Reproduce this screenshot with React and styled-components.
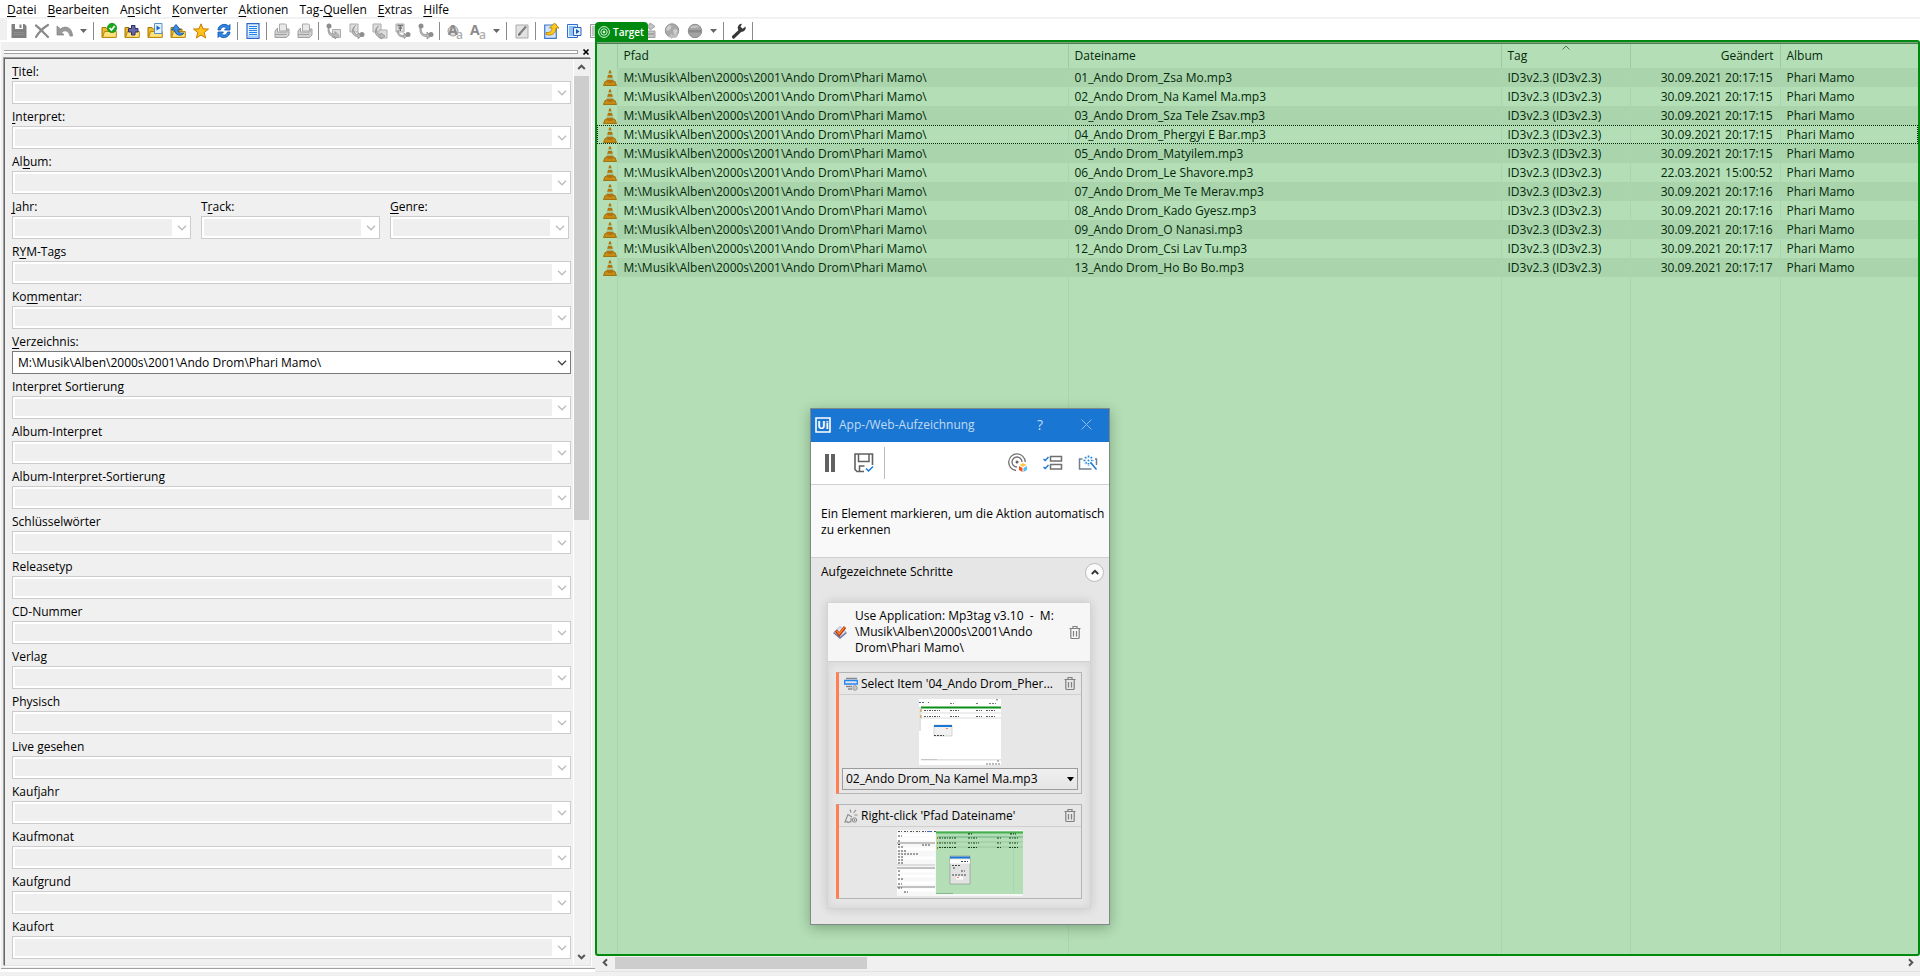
import React from "react";
import styled, { createGlobalStyle, css } from "styled-components";

const GlobalStyle = createGlobalStyle`
  *, *::before, *::after { box-sizing: border-box; }
  body {
    margin: 0;
    background: #f0f0f0;
    color: #000;
    font: 12px/16px "Open Sans", "Noto Sans", sans-serif;
  }
  button, select, input { font: inherit; color: inherit; margin: 0; }
  button { padding: 0; border: 0; background: none; }
  svg { display: block; overflow: visible; }
`;

/* ---------- window frame ---------- */

const Window = styled.div`
  display: flex;
  flex-direction: column;
  height: 100vh;
  min-height: 480px;
  overflow: hidden;
`;

const MenuBar = styled.nav`
  display: flex;
  gap: 11px;
  height: 18px;
  padding: 2px 7px 0;
  background: #fff;
`;

const MenuItem = styled.button`
  line-height: 16px;
  white-space: nowrap;
`;

const Key = styled.span`
  text-decoration: underline;
  text-underline-offset: 2px;
`;

const Toolbar = styled.div`
  display: flex;
  align-items: center;
  height: 22px;
  margin-left: 7px;
  padding-top: 2px;
  background: #fff;
  box-shadow: 0 -1px #f0f0f0;
  border-top: 1px solid #f4f4f4;
`;

const ToolButton = styled.button`
  display: grid;
  place-items: center;
  flex: none;
  width: 23px;
  height: 20px;
  visibility: ${(p) => (p.$covered ? "hidden" : "visible")};
`;

const DropButton = styled(ToolButton)`
  width: 15px;
`;

const Separator = styled.span`
  flex: none;
  width: 6px;
  height: 18px;
  background: linear-gradient(#8c8c8c, #8c8c8c) 2px 0 / 1px 100% no-repeat;
`;

const Main = styled.main`
  display: flex;
  flex: 1;
  min-height: 0;
`;

const StatusStrip = styled.div`
  height: 4px;
  background: #f0f0f0;
`;

/* ---------- tag panel ---------- */

const TagPane = styled.aside`
  display: flex;
  flex-direction: column;
  flex: none;
  width: 595px;
  padding: 5px 3px 3px 3px;
  border-top: 2px solid #fff;
  border-bottom: 3px solid #fff;
  border-left: 1px solid #fafafa;
  box-shadow: inset 0 -1px #a0a0a0;
`;

const Gripper = styled.div`
  display: flex;
  align-items: center;
  height: 10px;
  gap: 4px;
  margin-bottom: 1px;
`;

const GripLines = styled.div`
  width: 574px;
  height: 4px;
  border: solid #a0a0a0;
  border-width: 1px 1px 1px 0;
  background: #fff;
  flex: none;
`;

const CloseButton = styled.button`
  display: grid;
  place-items: center;
  width: 8px;
  height: 8px;
`;

const TagBox = styled.div`
  display: flex;
  flex: 1;
  min-height: 0;
  width: 587px;
  border: 1px solid;
  border-color: #696969 #e3e3e3 #e3e3e3 #696969;
  box-shadow: -1px -1px #a0a0a0, 1px 1px #fff;
  background: #f0f0f0;
`;

const TagForm = styled.form`
  flex: 1;
  min-width: 0;
  overflow: hidden;
  padding: 0 2px 0 7px;
  border-right: 1px solid #fff;
`;

const Field = styled.div`
  display: flex;
  flex-direction: column;
  min-width: 0;
`;

const FieldLabel = styled.label`
  height: 22px;
  padding-top: 5px;
`;

const FieldRow = styled.div`
  display: grid;
  grid-template-columns: repeat(3, 1fr);
  gap: 10px;
  margin-right: 2px;
`;

const ComboShell = styled.div`
  display: grid;
  height: 23px;
  align-items: center;
  svg { grid-area: 1 / 1; justify-self: end; margin-right: 4px; pointer-events: none; }
`;

const Combo = styled.select`
  grid-area: 1 / 1;
  appearance: none;
  width: 100%;
  height: 23px;
  padding: 0 22px 0 5px;
  border: 1px solid #ccc;
  border-radius: 0;
  opacity: 1;
  color: #000;
  background: #fff linear-gradient(#efefef, #efefef) 2px 2px / calc(100% - 20px) 17px no-repeat;
  ${(p) =>
    p.$filled &&
    css`
      border-color: #7a7a7a;
      background: #fff;
    `}
`;

const VScroll = styled.div`
  display: flex;
  flex-direction: column;
  width: 16px;
  background: #f0f0f0;
`;

const HScroll = styled.div`
  display: flex;
  height: 16px;
  margin-left: 1px;
  border-bottom: 1px solid #e3e3e3;
  background: #f0f0f0;
`;

const ScrollButton = styled.button`
  display: grid;
  place-items: center;
  flex: none;
  width: ${(p) => p.$w || 15}px;
  height: ${(p) => p.$h || 17}px;
`;

const VThumb = styled.div`
  height: 49%;
  margin-right: 1px;
  background: #cdcdcd;
`;

const HThumb = styled.div`
  width: 19%;
  height: 12px;
  margin-top: 1px;
  background: #cdcdcd;
`;

const Grow = styled.div`
  flex: 1;
`;

/* ---------- file list ---------- */

const ListPane = styled.section`
  position: relative;
  display: flex;
  flex-direction: column;
  flex: 1;
  min-width: 0;
  background: #f0f0f0;
`;

const TargetArea = styled.div`
  flex: 1;
  min-height: 0;
  border: 2px solid #00890f;
  border-radius: 0 3px 3px 3px;
  background: #b4deb6;
  position: relative;
  display: flex;
  flex-direction: column;
`;

const TargetEdge = styled.div`
  flex: none;
  height: 2px;
  background: #4e7f52;
  border-top: 1px solid #77a57a;
`;

const TargetTag = styled.div`
  position: absolute;
  left: -2px;
  top: -20px;
  display: flex;
  align-items: center;
  gap: 3px;
  height: 20px;
  padding: 0 4px 0 3px;
  border-radius: 4px 4px 0 0;
  background: #00890f;
  color: #fff;
  font: 600 10px/18px "Open Sans", sans-serif;
`;

const FileTable = styled.table`
  width: 100%;
  flex: 1;
  table-layout: fixed;
  border-collapse: collapse;
  color: #04290a;
`;

const Col = styled.col`
  width: ${(p) => (p.$w ? p.$w + "px" : "auto")};
`;

const HeadCell = styled.th`
  height: 24px;
  padding: 0 6px;
  font-weight: 400;
  text-align: ${(p) => (p.$right ? "right" : "left")};
  border-right: 1px solid #9fcaa2;
  &:last-child { border-right: 0; }
`;

const HeadInner = styled.span`
  display: grid;
  svg { grid-area: 1 / 1; justify-self: center; align-self: start; margin-top: -3px; }
  span { grid-area: 1 / 1; }
`;

const FileRow = styled.tr`
  height: 19px;
  ${(p) =>
    p.$focus &&
    css`
      outline: 1px dotted #04290a;
      outline-offset: -1px;
    `}
`;

const Cell = styled.td`
  height: 19px;
  padding: 0 7px 0 6px;
  white-space: nowrap;
  overflow: hidden;
  text-align: ${(p) => (p.$right ? "right" : "left")};
  background: ${(p) => (p.$shade ? "#aad4ac" : "transparent")};
  border-right: 1px solid #a9d5b5;
  &:last-child { border-right: 0; }
`;

const IconCell = styled.td`
  height: 19px;
  padding: 0 0 0 6px;
  border-right: 1px solid #a9d5b5;
`;

const FillerCell = styled.td`
  border-right: 1px solid #a9d5b5;
  &:last-child { border-right: 0; }
`;

/* ---------- recorder dialog ---------- */

const Dialog = styled.section`
  position: absolute;
  left: 810px;
  top: 408px;
  width: 300px;
  display: flex;
  flex-direction: column;
  border: 1px solid #7f8a86;
  background: #e6e6e6;
  box-shadow: 0 3px 12px rgba(0, 40, 0, 0.3);
`;

const TitleBar = styled.header`
  display: flex;
  align-items: center;
  height: 33px;
  padding: 0 17px 2px 4px;
  background: #1976d2;
  color: #c2dbf3;
`;

const Title = styled.h1`
  flex: 1;
  margin: 0 0 0 8px;
  font-size: 12px;
  font-weight: 400;
`;

const TitleButton = styled.button`
  display: grid;
  place-items: center;
  width: 12px;
  margin-left: 34px;
  font-size: 14px;
`;

const Tools = styled.div`
  display: flex;
  align-items: center;
  gap: 15px;
  height: 43px;
  padding: 0 11px 0 10px;
  background: #fff;
  border-bottom: 1px solid #d0d0d0;
`;

const IconButton = styled.button`
  display: grid;
  place-items: center;
  flex: none;
`;

const ToolsDivider = styled.span`
  width: 1px;
  height: 32px;
  margin-left: -5px;
  background: #bdbdbd;
`;

const Hint = styled.p`
  height: 73px;
  margin: 0;
  padding: 21px 4px 0 10px;
  background: #f9f9f9;
  border-bottom: 1px solid #d0d0d0;
`;

const Steps = styled.div`
  padding: 0 18px 15px 16px;
`;

const StepsHead = styled.div`
  display: flex;
  align-items: center;
  justify-content: space-between;
  height: 28px;
  padding: 0 5px 0 10px;
`;

const StepsTitle = styled.h2`
  margin: 0;
  font-size: 12px;
  font-weight: 400;
`;

const Collapse = styled.button`
  display: grid;
  place-items: center;
  width: 19px;
  height: 19px;
  border: 1px solid #bcbcbc;
  border-radius: 50%;
  background: #fbfbfb;
`;

const AppCard = styled.div`
  margin-top: 16px;
  border: 1px solid #d4d4d4;
  background: #e6e6e6;
  box-shadow: 0 0 10px rgba(0, 0, 0, 0.14);
`;

const AppHead = styled.div`
  display: grid;
  grid-template-columns: 14px 1fr 12px;
  align-items: center;
  gap: 8px;
  height: 59px;
  padding: 0 9px 0 5px;
  background: #f6f6f6;
  border-bottom: 1px solid #d0d0d0;
`;

const StepList = styled.div`
  display: flex;
  flex-direction: column;
  gap: 10px;
  padding: 10px 8px 9px;
  box-shadow: inset 0 0 10px rgba(0, 0, 0, 0.08);
`;

const Step = styled.article`
  border: 1px solid #b4b4b4;
  border-left: 3px solid #ff7f50;
  background: #e7e7e7;
`;

const StepHead = styled.div`
  display: flex;
  align-items: center;
  height: 22px;
  padding: 0 5px;
  border-bottom: 1px solid #cfcfcf;
`;

const StepName = styled.span`
  flex: 1;
  min-width: 0;
  margin: 0 5px 0 3px;
  overflow: hidden;
  white-space: nowrap;
  text-overflow: ellipsis;
`;

const Shot = styled.div`
  display: grid;
  place-items: center;
  height: ${(p) => p.$h}px;
`;

const StepComboShell = styled.div`
  display: grid;
  align-items: center;
  margin: 0 3px 3px;
  svg { grid-area: 1 / 1; justify-self: end; margin-right: 4px; pointer-events: none; }
`;

const StepCombo = styled.select`
  grid-area: 1 / 1;
  appearance: none;
  width: 100%;
  height: 22px;
  padding: 0 14px 0 3px;
  border: 1px solid #9c9c9c;
  border-radius: 0;
  background: linear-gradient(#f0f0f0, #e5e5e5);
`;

/* ---------- icons ---------- */

const Ico = ({ s = 16, children }) => (
  <svg width={s} height={s} viewBox="0 0 16 16" fill="none" aria-hidden="true">
    {children}
  </svg>
);

const FolderBase = () => (
  <>
    <path d="M1 4.5h4l1.500 1.500H12v8.500H1z" fill="#e9b92f" stroke="#a87400" />
    <path d="M3.500 8.500h11.800v5.900H1.600z" fill="#ffe27a" stroke="#b98408" />
  </>
);

const SheetGrey = ({ x = 5, y = 6 }) => (
  <path d={`M${x} ${y}h8v8h-8z`} fill="#dedede" stroke="#ababab" />
);

const icons = {
  save: (
    <Ico>
      <path d="M0.500 1h13l2 2v12H.5z" fill="#808080" />
      <path d="M4 1h8v5H4z" fill="#fff" />
      <path d="M8.500 1.500h2v3.500h-2z" fill="#808080" />
      <path d="M3 9.500h10M3 11.500h10" stroke="#8f8f8f" />
    </Ico>
  ),
  cut: (
    <Ico>
      <path d="M2 2.500c4 3 8 7.500 12 11.500M14 2C9 5 5 9 2 14" stroke="#8a8a8a" strokeWidth="2.200" strokeLinecap="round" />
    </Ico>
  ),
  undo: (
    <Ico>
      <path d="M0 3v9h7L4.500 9.200C8 6.500 12 8 13 13h2.500C15.500 5.500 9 1.500 3.500 6z" fill="#9a9a9a" stroke="#7e7e7e" strokeWidth=".7" />
    </Ico>
  ),
  down: (
    <svg width="7" height="4" viewBox="0 0 7 4" aria-hidden="true">
      <path d="M0 0h7L3.500 4z" fill="#666" />
    </svg>
  ),
  folderCheck: (
    <Ico>
      <FolderBase />
      <circle cx="11" cy="5" r="4.700" fill="#17a81c" stroke="#0b7c12" strokeWidth=".6" />
      <path d="M8.500 5l2 2 3.200-4" stroke="#fff" strokeWidth="1.700" />
    </Ico>
  ),
  folderPlus: (
    <Ico>
      <FolderBase />
      <path d="M7.500 2.500h3.500v3h3V9h-3v3H7.500V9h-3V5.500h3z" fill="#6668a8" stroke="#2c2e68" />
    </Ico>
  ),
  folderPlay: (
    <Ico>
      <FolderBase />
      <path d="M7.500.5h7.500v10H7.500z" fill="#e6f1ff" stroke="#5d8fc9" />
      <path d="M9.500 2.500v5l4-2.500z" fill="#1767c4" />
    </Ico>
  ),
  folderUp: (
    <Ico>
      <FolderBase />
      <path d="M1.500 7L6 1.500 10.500 7H8c0 2.500 2 3.500 6 3-2 3.500-9 3-9.500-3z" fill="#3c8ce0" stroke="#10509c" strokeWidth=".9" />
    </Ico>
  ),
  star: (
    <Ico>
      <path d="M8 .8l2 5 5.500.3-4.300 3.500 1.500 5.400L8 12l-4.700 3 1.500-5.400L.5 6.100 6 5.800z" fill="#ffc31e" stroke="#c47a00" />
    </Ico>
  ),
  refresh: (
    <Ico>
      <path d="M2 7c0-5 7-7.500 10.500-4L14 1.500V7H8.500l2-2C8 3 5 4 4.500 7zM14 9c0 5-7 7.500-10.500 4L2 14.500V9h5.500l-2 2c2.500 2 5.500 1 6-2z" fill="#2f86e6" stroke="#0b4fa3" strokeWidth=".8" />
    </Ico>
  ),
  list: (
    <Ico>
      <path d="M2 .7h12v14.600H2z" fill="#e4f1ff" stroke="#2c67c8" strokeWidth="1.200" />
      <path d="M4 3.500h8M4 5.500h8M4 7.500h8M4 9.500h8M4 11.500h8" stroke="#1e83ee" />
      <path d="M2.600 13.500h10.800" stroke="#9ecbfa" strokeWidth="1.600" />
    </Ico>
  ),
  printer: (
    <Ico>
      <path d="M5.500 1h6l1 1v6h-7z" fill="#e9e9e9" stroke="#a9a9a9" />
      <path d="M3.500 5L1 8v6.500h11.500L15 12V6h-2v3H3.500z" fill="#d2d2d2" stroke="#a0a0a0" />
      <path d="M1 11.500h11.500" stroke="#a0a0a0" />
    </Ico>
  ),
  toSheet: (
    <Ico>
      <SheetGrey x={6.5} y={6.5} />
      <circle cx="3" cy="3" r="2.500" fill="#8e8e8e" />
      <path d="M3 5c0 5 2 6 6 6V8.500l4 4-4 3.500v-2.500c-5 0-7-2-7-8z" fill="#bcbcbc" stroke="#8e8e8e" strokeWidth=".8" />
    </Ico>
  ),
  fromSheet: (
    <Ico>
      <SheetGrey x={1} y={1} />
      <path d="M6.500 2.500C3.500 5 4 11 9 11.500V9.500l4 3-4 3.200v-2C3 13.500 1 7 6.500 2.500z" fill="#bcbcbc" stroke="#8e8e8e" strokeWidth=".8" />
      <circle cx="13" cy="11.500" r="2.500" fill="#8e8e8e" />
    </Ico>
  ),
  sheetSheet: (
    <Ico>
      <SheetGrey x={1} y={1} />
      <SheetGrey x={7} y={7} />
      <path d="M6.500 3C3.500 6 3.500 11.500 9 12V10l4 3-4 3v-1.700C3 14 1 7 6.500 3z" fill="#bcbcbc" stroke="#8e8e8e" strokeWidth=".8" />
    </Ico>
  ),
  textTo: (
    <Ico>
      <SheetGrey x={1} y={1} />
      <path d="M2.500 2.500H8M5.300 2.500V8M3.500 5H7" stroke="#777" strokeWidth="1.400" />
      <path d="M3 7c.5 4 2 5.500 6 5.500V10l3 3-3 2.500V14c-5 0-7-2-6-7z" fill="#bcbcbc" stroke="#8e8e8e" strokeWidth=".8" />
      <circle cx="13" cy="11.500" r="2.500" fill="#8e8e8e" />
    </Ico>
  ),
  dotDot: (
    <Ico>
      <circle cx="3" cy="3" r="2.500" fill="#8e8e8e" />
      <path d="M3 5c0 5 2 6.500 6 6.500V9l4 4-4 3v-2.500C4 13.500 1.500 11 2 5z" fill="#bcbcbc" stroke="#8e8e8e" strokeWidth=".8" />
      <circle cx="13" cy="11.500" r="2.500" fill="#8e8e8e" />
    </Ico>
  ),
  caseRun: (
    <Ico>
      <circle cx="6" cy="8" r="5" fill="#dcdcdc" stroke="#9a9a9a" />
      <text x="1" y="12" fontFamily="Open Sans" fontWeight="700" fontSize="14" fill="#8a8a8a">A</text>
      <text x="9" y="16" fontFamily="Open Sans" fontWeight="600" fontSize="12" fill="#adadad">a</text>
    </Ico>
  ),
  caseText: (
    <Ico>
      <text x="0" y="12" fontFamily="Open Sans" fontWeight="700" fontSize="14" fill="#8a8a8a">A</text>
      <text x="9" y="16" fontFamily="Open Sans" fontWeight="600" fontSize="12" fill="#adadad">a</text>
    </Ico>
  ),
  edit: (
    <Ico>
      <path d="M2 2h12v13H2z" fill="#e2e2e2" stroke="#ababab" />
      <path d="M5.500 11L12 3.500" stroke="#808080" strokeWidth="2.200" />
      <path d="M4 13l.8-3 2 1.800z" fill="#555" />
    </Ico>
  ),
  exportSheet: (
    <Ico>
      <path d="M1.700 2h11.600v13.300H1.700z" fill="#cfe3fb" stroke="#3f78d0" strokeWidth="1.200" />
      <path d="M3 9.500c5 .5 6-2 6-4.500H6.500L11.500 0l4.500 5h-3c0 5-4 8.500-10 6.500z" fill="#ffc81f" stroke="#b37700" strokeWidth=".8" />
    </Ico>
  ),
  playlist: (
    <Ico>
      <path d="M1.500 1.500h10v13h-10z" fill="#e4f1ff" stroke="#2f6fd0" />
      <path d="M3 4h7M3 6h7M3 8h4M3 10h4M3 12h7" stroke="#3d90ee" />
      <path d="M7.500 4.500H15v8H7.500z" fill="#e6f1ff" stroke="#2862bd" />
      <path d="M10 6v5l3.500-2.500z" fill="#1455b0" />
    </Ico>
  ),
  grayList: (
    <Ico>
      <path d="M1.500 1.500h12v13h-12z" fill="#eee" stroke="#999" />
      <path d="M3 4h9M3 6h9M3 8h9M3 10h9M3 12h9" stroke="#999" />
    </Ico>
  ),
  outbox: (
    <Ico>
      <path d="M3 2h6V0l5 3.500L9 7V5H3zM2 8h12v6.500H2z" fill="#c4c4c4" stroke="#a0a0a0" />
      <path d="M3 11h10" stroke="#888" />
    </Ico>
  ),
  globe: (
    <Ico>
      <circle cx="8" cy="7.500" r="6.700" fill="#a9a9a9" stroke="#929292" />
      <path d="M3 4c3-3 5-2 4 1S3 8 2 7zM9 7c3-2 6 0 4 3s-3 3-4-3z" fill="#cfcfcf" />
      <path d="M8 10v2c3 .5 4-1 4-3l2 3c-1 3-3 3-6 3v1l-3-3z" fill="#bdbdbd" />
    </Ico>
  ),
  globeFlat: (
    <Ico>
      <circle cx="8" cy="8" r="6.700" fill="#a4a4a4" stroke="#8c8c8c" />
      <path d="M2 7h12v2.500H2z" fill="#8a8a8a" />
      <path d="M3 5c2-3 8-3 9-1l-5 1z" fill="#c6c6c6" />
    </Ico>
  ),
  wrench: (
    <Ico>
      <path d="M2.500 14L9 7.800" stroke="#383838" strokeWidth="3.200" strokeLinecap="round" />
      <path d="M14.500 3.500A4 4 0 1 1 11 .8L9.500 3.800l2.200 2z" fill="#383838" />
    </Ico>
  ),
};

const Chevron = ({ color = "#bcbcbc" }) => (
  <svg width="10" height="6" viewBox="0 0 10 6" fill="none" aria-hidden="true">
    <path d="M1 .8L5 4.800l4-4" stroke={color} strokeWidth="1.300" />
  </svg>
);

const rotations = { up: 0, right: 90, down: 180, left: 270 };

const ScrollArrow = ({ dir }) => (
  <svg width="9" height="9" viewBox="0 0 9 9" fill="none" aria-hidden="true">
    <path d="M1.200 6L4.500 2.700 7.800 6" stroke="#555" strokeWidth="2" transform={`rotate(${rotations[dir]} 4.500 4.500)`} />
  </svg>
);

const Cone = () => (
  <svg width="14" height="16" viewBox="0 0 14 16" aria-hidden="true">
    <path d="M2 11.500h10l1.500 4H.5z" fill="#c98a10" stroke="#966400" strokeWidth=".8" />
    <path d="M6.200.5h1.600L11 12c-1 1.500-7 1.500-8 0z" fill="#a3cf9f" />
    <path d="M6.200.5h1.600l.7 2.700h-3zM5 5h4l.8 2.800H4.200zM3.600 9.700h6.800L11 12c-1 1.500-7 1.500-8 0z" fill="#b5720a" />
  </svg>
);

const TargetIcon = () => (
  <svg width="12" height="12" viewBox="0 0 12 12" fill="none" stroke="#d9f5d9" aria-hidden="true">
    <circle cx="6" cy="6" r="5.400" />
    <circle cx="6" cy="6" r="3.200" />
    <circle cx="6" cy="6" r="1" fill="#fff" />
  </svg>
);

const UiLogo = () => (
  <svg width="16" height="16" viewBox="0 0 16 16" aria-hidden="true">
    <path d="M1 1h14v14H1z" fill="#1976d2" stroke="#fff" strokeWidth="1.600" />
    <text x="8" y="12" textAnchor="middle" fontFamily="Open Sans" fontWeight="700" fontSize="11" fill="#fff">Ui</text>
  </svg>
);

const PauseIcon = () => (
  <svg width="18" height="18" viewBox="0 0 18 18" aria-hidden="true">
    <path d="M4 0h4v18H4zM10 0h4v18h-4z" fill="#616161" />
  </svg>
);

const SaveCheckIcon = () => (
  <svg width="20" height="20" viewBox="0 0 20 20" fill="none" aria-hidden="true">
    <path d="M10 18.500H3L1 16.500V1h17.500v11" stroke="#616161" strokeWidth="1.600" />
    <path d="M4.500 1v7.500H15V1M5.500 18.500V13h5" stroke="#616161" strokeWidth="1.500" />
    <path d="M12 15.500l2.500 2.500 4.500-4.500" stroke="#1976d2" strokeWidth="1.500" />
  </svg>
);

const TargetCubeIcon = () => (
  <svg width="20" height="20" viewBox="0 0 20 20" fill="none" aria-hidden="true">
    <path d="M8 17.500A8.300 8.300 0 1 1 17.300 9" stroke="#707070" strokeWidth="1.300" />
    <path d="M9 14A5 5 0 1 1 14 9" stroke="#707070" strokeWidth="1.300" />
    <circle cx="9" cy="9" r="1.500" fill="#616161" />
    <path d="M15 10l3.500 2-3.500 2-3.500-2z" fill="#ffc94a" />
    <path d="M11 13l3.500 2v4L11 17z" fill="#f4511e" />
    <path d="M19 13l-3.500 2v4L19 17z" fill="#4fc3f7" />
  </svg>
);

const ChecklistIcon = () => (
  <svg width="20" height="18" viewBox="0 0 20 18" fill="none" aria-hidden="true">
    <path d="M7.500 2.500h11v4.500h-11zM7.500 10.500h11V15h-11z" stroke="#707070" strokeWidth="1.500" />
    <path d="M.5 5l1.700 1.500L5.500 3M.5 13l1.700 1.500L5.500 11" stroke="#1976d2" strokeWidth="1.400" />
  </svg>
);

const WandIcon = () => (
  <svg width="20" height="18" viewBox="0 0 20 18" fill="none" aria-hidden="true">
    <path d="M4.500 5h-3v10h12M17 5h1.500v6" stroke="#70808e" strokeWidth="1.500" />
    <path d="M13 9l5.500 6.500" stroke="#1976d2" strokeWidth="1.500" />
    <path
      d="M10.500 1.500v2.500M10.500 9v2.500M5.500 6.500H8M13 6.500h2.500M7 3l1.700 1.700M12.300 8.300L14 10M14 3l-1.700 1.700M8.700 8.300L7 10"
      stroke="#1e88e5"
      strokeWidth="1.700"
      strokeDasharray="1.600 .5"
    />
    <circle cx="10.500" cy="6.500" r="1" fill="#1e88e5" />
  </svg>
);

const TrashIcon = () => (
  <svg width="12" height="13" viewBox="0 0 12 13" fill="none" stroke="#808080" aria-hidden="true">
    <path d="M.5 2.500h11M4 2V.5h4V2M1.800 2.500v9q0 1 1 1h6.400q1 0 1-1v-9M4.500 5v5.500M7.500 5v5.500" strokeWidth="1.200" />
  </svg>
);

const AppIcon = () => (
  <svg width="14" height="14" viewBox="0 0 14 14" aria-hidden="true">
    <path d="M7 2l7 6-7 6-7-6z" fill="#6f7aa6" />
    <path d="M7 1.500l6 5.500-6 5-6-5z" fill="#dfe4f2" stroke="#8c95b5" strokeWidth=".6" />
    <path d="M3 5.500l3.200 4L12 2" fill="none" stroke="#b8330b" strokeWidth="3" />
    <path d="M3.500 5.700L6.200 9 11.500 2.200" fill="none" stroke="#ff8a2c" strokeWidth="1.300" />
  </svg>
);

const SelectItemIcon = () => (
  <svg width="14" height="14" viewBox="0 0 14 14" fill="none" aria-hidden="true">
    <path d="M2 1.500h11M2 9.500h6M4 12h4" stroke="#8a8a8a" strokeWidth="1.300" />
    <path d="M.7 3.500h12.600V7H.7z" stroke="#2484f0" strokeWidth="1.300" />
    <circle cx="11" cy="11" r="2.200" stroke="#8a8a8a" />
    <circle cx="11" cy="11" r=".7" fill="#8a8a8a" />
  </svg>
);

const ClickIcon = () => (
  <svg width="14" height="14" viewBox="0 0 14 14" fill="none" stroke="#8a8a8a" aria-hidden="true">
    <path d="M6 .5l1 3M12 1L9.500 4M13.500 6h-3M8 8L4 5.500 1 13l2-.5 1 1 3-1V9" strokeWidth="1.100" />
    <circle cx="10.500" cy="11" r="2.200" />
    <circle cx="10.500" cy="11" r=".6" fill="#8a8a8a" />
  </svg>
);

const ListShot = () => (
  <svg width="82" height="66" viewBox="0 0 82 66" aria-hidden="true">
    <path d="M0 0h82v66H0z" fill="#fff" />
    <path d="M0 8h2v24H0zM2 60h80v1.500H2z" fill="#e2e2e2" />
    <path d="M2 14h80M2 19h80" stroke="#eee" strokeWidth="2" />
    <path d="M2 8.500h80" stroke="#0b8f17" strokeWidth="2" />
    <path d="M0 3.500h5M9 3.500h1" stroke="#4a5f93" strokeDasharray="2 1" />
    <path d="M31 4.500h4M57 4.500h2M70 4.500h7M77 .8h2M78 62h3M67 65h14" stroke="#777" strokeDasharray="2 1" />
    <path d="M5 11.500h16M31 11.500h9M57 11.500h6M67 11.500h10M5 17.500h16M31 17.500h9M57 17.500h6M67 17.500h10" stroke="#555" strokeWidth="1.200" strokeDasharray="2 1 1 1" />
    <path d="M2 10v3M2 16v3" stroke="#d27a1c" strokeWidth="1" />
    <path d="M15 26h18v11H15z" fill="#f1f1f1" stroke="#c0c0c0" strokeWidth=".6" />
    <path d="M15 26h18v2H15z" fill="#1976d2" />
    <path d="M15 36.500h10" stroke="#444" strokeDasharray="2 1" />
    <path d="M27 29.500h2" stroke="#ff7f50" />
    <path d="M2 60.500h16" stroke="#c6c6c6" />
  </svg>
);

const DesktopShot = () => (
  <svg width="126" height="66" viewBox="0 0 126 66" aria-hidden="true">
    <path d="M0 0h126v66H0z" fill="#f7f7f7" />
    <path d="M0 5h38M0 9h38M0 19h38M0 28h38M0 41h38M0 46h38M0 53h38M0 60h38" stroke="#fff" strokeWidth="3" />
    <path d="M0 13h38M0 38h38M0 57h38" stroke="#8a8a8a" />
    <path d="M0 35h38" stroke="#c4c4c4" />
    <path d="M1 1.500h48" stroke="#555" strokeDasharray="2 1 1 2" />
    <path d="M30 1.500h4" stroke="#3b6fc4" />
    <path d="M1 6h4M1 11h2M1 14.500h3M25 15h9M1 17h5M1 21h8M1 24h20M1 27h5M1 30h5M1 33h5M1 41h2M1 45h2M1 49h5M1 54h4M1 58h4M7 62h4" stroke="#444" strokeDasharray="2 1" />
    <path d="M39 1h87v63H39z" fill="#b4deb6" />
    <path d="M39 2.500h87" stroke="#45b04d" strokeWidth="2" />
    <path d="M41 7h85" stroke="#8fc79c" strokeWidth="2" />
    <path d="M41 12h85M41 17h85" stroke="#a6d3a8" strokeWidth="2" />
    <path d="M42 8h18M71 8h10M100 8h4M112 8h9M42 13h18M71 13h11M100 13h4M112 13h9M42 17.500h18M71 17.500h10M100 17.500h4M112 17.500h9M71 3.800h4M113 3.800h6" stroke="#16401a" strokeWidth="1.200" strokeDasharray="2 1 1 1" />
    <path d="M40.500 7v2M40.500 12v2M40.500 17v2" stroke="#b4780d" />
    <path d="M116.500 18v45" stroke="#a9d5b5" />
    <path d="M39 63.500h17" stroke="#85b889" />
    <path d="M53 26h20v28H53z" fill="#e2e2e2" stroke="#8f9c90" strokeWidth=".7" />
    <path d="M53 29.500h20v4H53z" fill="#fff" />
    <path d="M53 27.500h20" stroke="#1976d2" strokeWidth="2" />
    <path d="M55 35.500h8M56 38h2M64 31.500h7M64 41h4M55 45h14" stroke="#444" strokeDasharray="2 1" />
    <path d="M59 46.500h7v3h-7z" fill="#fff" />
    <path d="M60 47.500h2" stroke="#ff7f50" />
  </svg>
);

/* ---------- data ---------- */

const menu = [
  ["", "D", "atei"],
  ["", "B", "earbeiten"],
  ["A", "n", "sicht"],
  ["", "K", "onverter"],
  ["", "A", "ktionen"],
  ["Tag-", "Q", "uellen"],
  ["", "E", "xtras"],
  ["", "H", "ilfe"],
];

const tools = [
  ["save", "Speichern"], ["cut", "Entfernen"], ["undo", "Rückgängig"], "drop", "sep",
  ["folderCheck", "Verzeichnis wechseln"], ["folderPlus", "Verzeichnis hinzufügen"],
  ["folderPlay", "Playlist öffnen"], ["folderUp", "Übergeordnetes Verzeichnis"],
  ["star", "Favoriten"], ["refresh", "Aktualisieren"], "sep",
  ["list", "Alle auswählen"], "sep",
  ["printer", "Tag kopieren"], ["printer", "Tag einfügen"], "sep",
  ["toSheet", "Dateiname - Tag"], ["fromSheet", "Tag - Dateiname"],
  ["sheetSheet", "Dateiname - Dateiname"], ["textTo", "Textdatei - Tag"],
  ["dotDot", "Tag - Tag"], "sep",
  ["caseRun", "Aktionen"], ["caseText", "Aktionen schnell"], "drop", "sep",
  ["edit", "Erweiterte Tags"], "sep",
  ["exportSheet", "Exportieren"], ["playlist", "Playlist"], ["grayList", "Liste"],
  ["grayList", "Nummerieren", true], "sep",
  ["outbox", "Tag-Quelle"], ["globe", "Websuche"], ["globeFlat", "Web"], "drop", "sep",
  ["wrench", "Optionen"], "sep",
];

const path = "M:\\Musik\\Alben\\2000s\\2001\\Ando Drom\\Phari Mamo\\";

const fields = [
  ["", "T", "itel:"],
  ["", "I", "nterpret:"],
  ["Al", "b", "um:"],
  [["", "J", "ahr:"], ["T", "r", "ack:"], ["", "G", "enre:"]],
  ["R", "Y", "M-Tags"],
  ["Ko", "m", "mentar:"],
  ["", "V", "erzeichnis:", path],
  ["Interpret Sortierung"],
  ["Album-Interpret"],
  ["Album-Interpret-Sortierung"],
  ["Schlüsselwörter"],
  ["Releasetyp"],
  ["CD-Nummer"],
  ["Verlag"],
  ["Physisch"],
  ["Live gesehen"],
  ["Kaufjahr"],
  ["Kaufmonat"],
  ["Kaufgrund"],
  ["Kaufort"],
];

const files = [
  ["01_Ando Drom_Zsa Mo.mp3", "30.09.2021 20:17:15"],
  ["02_Ando Drom_Na Kamel Ma.mp3", "30.09.2021 20:17:15"],
  ["03_Ando Drom_Sza Tele Zsav.mp3", "30.09.2021 20:17:15"],
  ["04_Ando Drom_Phergyi E Bar.mp3", "30.09.2021 20:17:15"],
  ["05_Ando Drom_Matyilem.mp3", "30.09.2021 20:17:15"],
  ["06_Ando Drom_Le Shavore.mp3", "22.03.2021 15:00:52"],
  ["07_Ando Drom_Me Te Merav.mp3", "30.09.2021 20:17:16"],
  ["08_Ando Drom_Kado Gyesz.mp3", "30.09.2021 20:17:16"],
  ["09_Ando Drom_O Nanasi.mp3", "30.09.2021 20:17:16"],
  ["12_Ando Drom_Csi Lav Tu.mp3", "30.09.2021 20:17:17"],
  ["13_Ando Drom_Ho Bo Bo.mp3", "30.09.2021 20:17:17"],
];

/* ---------- parts ---------- */

const Mnemonic = ({ parts: [before, key, after] }) => (
  <>
    {before}
    {key && <Key>{key}</Key>}
    {after}
  </>
);

const TagField = ({ parts }) => {
  const id = "tag-" + parts.slice(0, 3).join("").toLowerCase().replace(/[^a-z0-9]+/g, "-");
  const value = parts[3];
  return (
    <Field>
      <FieldLabel htmlFor={id}>
        <span><Mnemonic parts={parts} /></span>
      </FieldLabel>
      <ComboShell>
        <Combo id={id} disabled={!value} $filled={!!value}>
          <option>{value || ""}</option>
        </Combo>
        <Chevron color={value ? "#444" : undefined} />
      </ComboShell>
    </Field>
  );
};

const TagPanel = () => (
  <TagPane>
    <Gripper>
      <GripLines />
      <CloseButton aria-label="Schließen">
        <svg width="6" height="6" viewBox="0 0 6 6" aria-hidden="true">
          <path d="M.5.5l5 5M5.500.5l-5 5" stroke="#000" strokeWidth="1.700" />
        </svg>
      </CloseButton>
    </Gripper>
    <TagBox>
      <TagForm>
        {fields.map((f, i) =>
          Array.isArray(f[0]) ? (
            <FieldRow key={i}>
              {f.map((p) => <TagField key={p.join("")} parts={p} />)}
            </FieldRow>
          ) : (
            <TagField key={i} parts={f} />
          )
        )}
      </TagForm>
      <VScroll>
        <ScrollButton aria-label="Nach oben"><ScrollArrow dir="up" /></ScrollButton>
        <VThumb />
        <Grow />
        <ScrollButton aria-label="Nach unten"><ScrollArrow dir="down" /></ScrollButton>
      </VScroll>
    </TagBox>
  </TagPane>
);

const FileList = () => (
  <ListPane>
    <TargetArea>
      <TargetTag><TargetIcon />Target</TargetTag>
      <TargetEdge />
      <FileTable>
        <colgroup>
          <Col $w={20} /><Col $w={451} /><Col $w={433} /><Col $w={129} /><Col $w={150} /><Col />
        </colgroup>
        <thead>
          <tr>
            <HeadCell />
            <HeadCell>Pfad</HeadCell>
            <HeadCell>Dateiname</HeadCell>
            <HeadCell>
              <HeadInner>
                <span>Tag</span>
                <svg width="8" height="5" viewBox="0 0 8 5" fill="none" aria-hidden="true">
                  <path d="M.5 4.500L4 1l3.500 3.500" stroke="#4c7a50" />
                </svg>
              </HeadInner>
            </HeadCell>
            <HeadCell $right>Geändert</HeadCell>
            <HeadCell>Album</HeadCell>
          </tr>
        </thead>
        <tbody>
          {files.map(([name, date], i) => {
            const shade = i % 2 === 0;
            return (
              <FileRow key={name} $focus={i === 3}>
                <IconCell><Cone /></IconCell>
                <Cell $shade={shade}>{path}</Cell>
                <Cell $shade={shade}>{name}</Cell>
                <Cell $shade={shade}>ID3v2.3 (ID3v2.3)</Cell>
                <Cell $shade={shade} $right>{date}</Cell>
                <Cell $shade={shade}>Phari Mamo</Cell>
              </FileRow>
            );
          })}
          <tr>
            {[0, 1, 2, 3, 4, 5].map((c) => <FillerCell key={c} />)}
          </tr>
        </tbody>
      </FileTable>
    </TargetArea>
    <HScroll>
      <ScrollButton $w={19} $h={13} aria-label="Nach links"><ScrollArrow dir="left" /></ScrollButton>
      <HThumb />
      <Grow />
      <ScrollButton $w={19} $h={13} aria-label="Nach rechts"><ScrollArrow dir="right" /></ScrollButton>
    </HScroll>
  </ListPane>
);

const Recorder = () => (
  <Dialog role="dialog" aria-label="App-/Web-Aufzeichnung">
    <TitleBar>
      <UiLogo />
      <Title>App-/Web-Aufzeichnung</Title>
      <TitleButton>?</TitleButton>
      <TitleButton aria-label="Schließen">
        <svg width="11" height="11" viewBox="0 0 11 11" aria-hidden="true">
          <path d="M.5.5l10 10M10.500.5l-10 10" stroke="#8fbcea" />
        </svg>
      </TitleButton>
    </TitleBar>
    <Tools>
      <IconButton aria-label="Pause"><PauseIcon /></IconButton>
      <IconButton aria-label="Speichern"><SaveCheckIcon /></IconButton>
      <ToolsDivider />
      <Grow />
      <IconButton aria-label="Ziel"><TargetCubeIcon /></IconButton>
      <IconButton aria-label="Optionen"><ChecklistIcon /></IconButton>
      <IconButton aria-label="Markieren"><WandIcon /></IconButton>
    </Tools>
    <Hint>Ein Element markieren, um die Aktion automatisch zu erkennen</Hint>
    <StepsHead>
      <StepsTitle>Aufgezeichnete Schritte</StepsTitle>
      <Collapse aria-label="Einklappen">
        <svg width="8" height="6" viewBox="0 0 8 6" fill="none" aria-hidden="true">
          <path d="M.8 5L4 1.800 7.200 5" stroke="#333" strokeWidth="1.900" />
        </svg>
      </Collapse>
    </StepsHead>
    <Steps>
      <AppCard>
        <AppHead>
          <AppIcon />
          <span>
            Use Application: Mp3tag v3.10&nbsp; -&nbsp; M:<br />
            \Musik\Alben\2000s\2001\Ando<br />
            Drom\Phari Mamo\
          </span>
          <IconButton aria-label="Löschen"><TrashIcon /></IconButton>
        </AppHead>
        <StepList>
          <Step>
            <StepHead>
              <SelectItemIcon />
              <StepName>Select Item '04_Ando Drom_Pher...</StepName>
              <IconButton aria-label="Löschen"><TrashIcon /></IconButton>
            </StepHead>
            <Shot $h={73}><ListShot /></Shot>
            <StepComboShell>
              <StepCombo aria-label="Element">
                <option>02_Ando Drom_Na Kamel Ma.mp3</option>
              </StepCombo>
              <svg width="7" height="5" viewBox="0 0 7 5" aria-hidden="true">
                <path d="M0 0h7L3.500 4.500z" />
              </svg>
            </StepComboShell>
          </Step>
          <Step>
            <StepHead>
              <ClickIcon />
              <StepName>Right-click 'Pfad Dateiname'</StepName>
              <IconButton aria-label="Löschen"><TrashIcon /></IconButton>
            </StepHead>
            <Shot $h={71}><DesktopShot /></Shot>
          </Step>
        </StepList>
      </AppCard>
    </Steps>
  </Dialog>
);

export default function App() {
  return (
    <Window>
      <GlobalStyle />
      <MenuBar>
        {menu.map((m) => (
          <MenuItem key={m.join("")}><Mnemonic parts={m} /></MenuItem>
        ))}
      </MenuBar>
      <Toolbar role="toolbar">
        {tools.map((t, i) => {
          if (t === "sep") return <Separator key={i} />;
          if (t === "drop") return <DropButton key={i} aria-label="Mehr">{icons.down}</DropButton>;
          return (
            <ToolButton key={i} aria-label={t[1]} $covered={t[2]}>
              {icons[t[0]]}
            </ToolButton>
          );
        })}
      </Toolbar>
      <Main>
        <TagPanel />
        <FileList />
      </Main>
      <StatusStrip />
      <Recorder />
    </Window>
  );
}
